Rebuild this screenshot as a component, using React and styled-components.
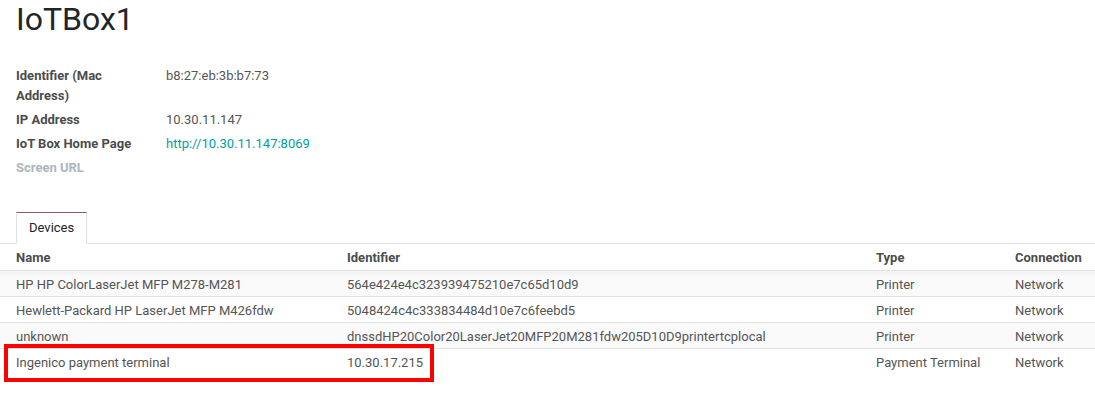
import React from 'react';
import styled, { createGlobalStyle } from 'styled-components';

const GlobalStyle = createGlobalStyle`
  body {
    margin: 0;
    background: #fff;
    font-family: Roboto, "Noto Sans", sans-serif;
    font-size: 13px;
    color: #4c4c4c;
  }
`

const Sheet = styled.div`
  width: 1095px;
  height: 415px;
  overflow: hidden;
`

const Title = styled.h1`
  margin: 0;
  padding: 0 16px;
  font-size: 32px;
  font-weight: 400;
  line-height: 38px;
  color: #212529;
`

const Fields = styled.div`
  display: grid;
  grid-template-columns: 150px 1fr;
  row-gap: 4px;
  margin-top: 28px;
  padding: 0 16px;
  line-height: 20px;
`

const Label = styled.div`
  font-weight: 700;
  padding-right: 16px;
  color: ${p => (p.$muted ? '#adb5bd' : '#4c4c4c')};
`

const Value = styled.div`
  color: #555;
`

const Link = styled.a`
  color: #00a09d;
  text-decoration: none;
`

const Tabs = styled.ul`
  display: flex;
  list-style: none;
  margin: 34px 0 0;
  padding: 0 16px;
`

const Tab = styled.li`
  margin-bottom: -1px;
  padding: 0 12px;
  height: 30px;
  line-height: 30px;
  background: #fff;
  color: #212529;
  border: 1px solid #dee2e6;
  border-top-color: #875a7b;
  border-bottom-color: #fff;
  position: relative;
  z-index: 1;
`

const TableWrap = styled.div`
  position: relative;
`

const Table = styled.table`
  width: 100%;
  table-layout: fixed;
  border-collapse: collapse;
  border-top: 1px solid #dee2e6;
`

const HeadRow = styled.tr`
  border-bottom: 1px solid #e0e0e0;
`

const Head = styled.th`
  text-align: left;
  font-weight: 700;
  padding: 4px 16px 3px;
  line-height: 19px;
  color: #4c4c4c;
  width: ${p => p.$w || 'auto'};
`

const Row = styled.tr`
  background: ${p => (p.$odd ? '#fafafa' : '#fff')};
  border-top: 1px solid #e2e2e2;
`

const Cell = styled.td`
  padding: 4px 16px 2px;
  line-height: 19px;
  color: #555;
  white-space: nowrap;
  overflow: visible;
  background: ${p => (p.$shade ? 'linear-gradient(#f0f0f0, #fafafa 5px)' : 'transparent')};
`

const Highlight = styled.div`
  position: absolute;
  left: 4px;
  top: 101px;
  width: 430px;
  height: 38px;
  box-sizing: border-box;
  border: 4px solid #f00;
  pointer-events: none;
`

const devices = [
  ['HP HP ColorLaserJet MFP M278-M281', '564e424e4c323939475210e7c65d10d9', 'Printer', 'Network'],
  ['Hewlett-Packard HP LaserJet MFP M426fdw', '5048424c4c333834484d10e7c6feebd5', 'Printer', 'Network'],
  ['unknown', 'dnssdHP20Color20LaserJet20MFP20M281fdw205D10D9printertcplocal', 'Printer', 'Network'],
  ['Ingenico payment terminal', '10.30.17.215', 'Payment Terminal', 'Network'],
]

export default function App() {
  return (
    <Sheet>
      <GlobalStyle />
      <Title>IoTBox1</Title>
      <Fields>
        <Label>Identifier (Mac Address)</Label>
        <Value>b8:27:eb:3b:b7:73</Value>
        <Label>IP Address</Label>
        <Value>10.30.11.147</Value>
        <Label>IoT Box Home Page</Label>
        <Value><Link href="#">http://10.30.11.147:8069</Link></Value>
        <Label $muted>Screen URL</Label>
        <Value></Value>
      </Fields>
      <Tabs>
        <Tab>Devices</Tab>
      </Tabs>
      <TableWrap>
        <Table>
          <thead>
            <HeadRow>
              <Head $w="299px">Name</Head>
              <Head $w="497px">Identifier</Head>
              <Head $w="107px">Type</Head>
              <Head>Connection</Head>
            </HeadRow>
          </thead>
          <tbody>
            {devices.map((d, i) => (
              <Row key={i} $odd={i % 2 === 0}>
                {d.map((v, j) => <Cell key={j} $shade={i === 0}>{v}</Cell>)}
              </Row>
            ))}
          </tbody>
        </Table>
        <Highlight />
      </TableWrap>
    </Sheet>
  )
}
